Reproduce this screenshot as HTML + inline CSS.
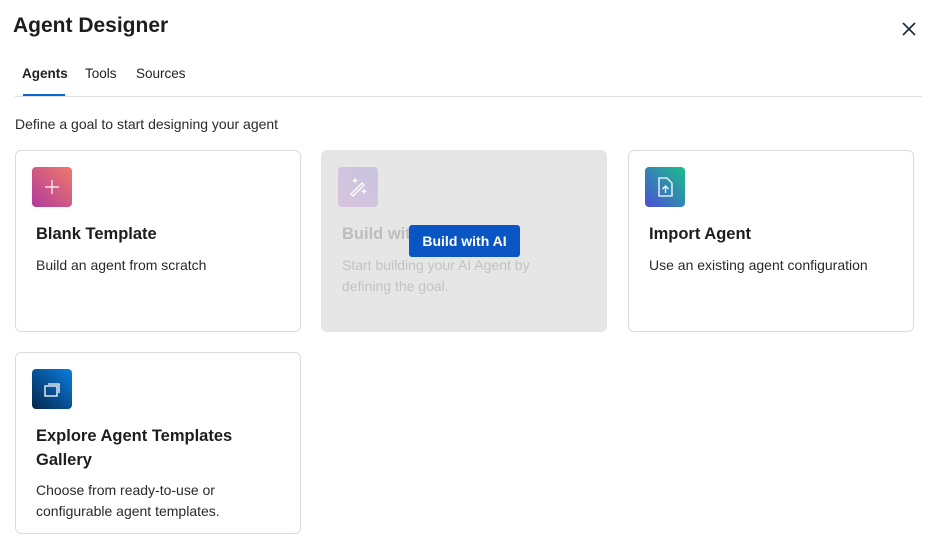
<!DOCTYPE html>
<html><head><style>
*{box-sizing:border-box;margin:0;padding:0}
body{width:936px;height:556px;background:#fff;font-family:"Liberation Sans",sans-serif;color:#1a1a1a;position:relative;overflow:hidden}
.abs{position:absolute}
h1{position:absolute;left:13px;top:14px;font-size:21px;font-weight:bold;color:#1d1d1d}
.tab{position:absolute;top:66px;font-size:13.5px;color:#222}
.card{position:absolute;border:1px solid #dcdcdc;border-radius:6px;background:#fff;width:286px;height:182px}
.ic{position:absolute;left:16px;top:16px;width:40px;height:40px;border-radius:4px}
.t{position:absolute;left:20px;top:71px;font-size:16.5px;font-weight:bold;color:#1d1d1d;line-height:24px}
.d{position:absolute;left:20px;font-size:14px;color:#2a2a2a;line-height:21px}
</style></head><body>
<h1>Agent Designer</h1>
<svg class="abs" style="left:901px;top:21px" width="16" height="16" viewBox="0 0 16 16"><path d="M2 2L14 14M14 2L2 14" stroke="#1d2a44" stroke-width="1.6"/></svg>
<div class="tab" style="left:22px;font-weight:bold">Agents</div>
<div class="tab" style="left:85px">Tools</div>
<div class="tab" style="left:136px">Sources</div>
<div class="abs" style="left:15px;top:96px;width:907px;height:1px;background:#e0e0e0"></div>
<div class="abs" style="left:23px;top:94px;width:42px;height:2px;background:#0a66d6"></div>
<div class="abs" style="left:15px;top:116px;font-size:14px;color:#2a2a2a">Define a goal to start designing your agent</div>

<div class="card" style="left:15px;top:150px">
<div class="ic" style="background:linear-gradient(45deg,#b23a9c,#f07a6a)"><svg width="40" height="40"><path d="M20 13V27M13 20H27" stroke="#fff" stroke-width="1.2"/></svg></div>
<div class="t">Blank Template</div>
<div class="d" style="top:104px">Build an agent from scratch</div></div>

<div class="card" style="left:321px;top:150px;background:#e6e6e6;border-color:#e6e6e6">
<div class="ic" style="background:linear-gradient(45deg,#d8c4dc,#c8c4e0)"><svg width="40" height="40"><path d="M13 27L24 16l2 2-11 11z M17 11v5M14.5 13.5h5M26 22v5M23.5 24.5h5" stroke="#fff" stroke-width="1.3" fill="none"/></svg></div>
<div class="t" style="color:#bdbdbd">Build with AI</div>
<div class="d" style="top:104px;color:#c2c2c2">Start building your AI Agent by<br>defining the goal.</div></div>
<div class="abs" style="left:409px;top:225px;width:111px;height:32px;background:#0a55c4;border-radius:3px;color:#fff;font-weight:bold;font-size:14px;text-align:center;line-height:32px">Build with AI</div>

<div class="card" style="left:628px;top:150px">
<div class="ic" style="background:linear-gradient(45deg,#4b4fd8,#1abf8a)"><svg width="40" height="40"><path d="M14 11h8l5 5v13H14z" stroke="#fff" stroke-width="1.3" fill="none"/><path d="M20.5 26v-7M17.5 22l3-3 3 3" stroke="#fff" stroke-width="1.3" fill="none"/></svg></div>
<div class="t">Import Agent</div>
<div class="d" style="top:104px">Use an existing agent configuration</div></div>

<div class="card" style="left:15px;top:352px">
<div class="ic" style="background:linear-gradient(45deg,#05264a,#0a7ee0)"><svg width="40" height="40"><rect x="13" y="17" width="12" height="10" stroke="#fff" stroke-width="1.3" fill="none"/><path d="M16 15h11v9" stroke="#fff" stroke-width="1.3" fill="none"/></svg></div>
<div class="t" style="top:71px">Explore Agent Templates<br>Gallery</div>
<div class="d" style="top:127px">Choose from ready-to-use or<br>configurable agent templates.</div></div>
</body></html>
